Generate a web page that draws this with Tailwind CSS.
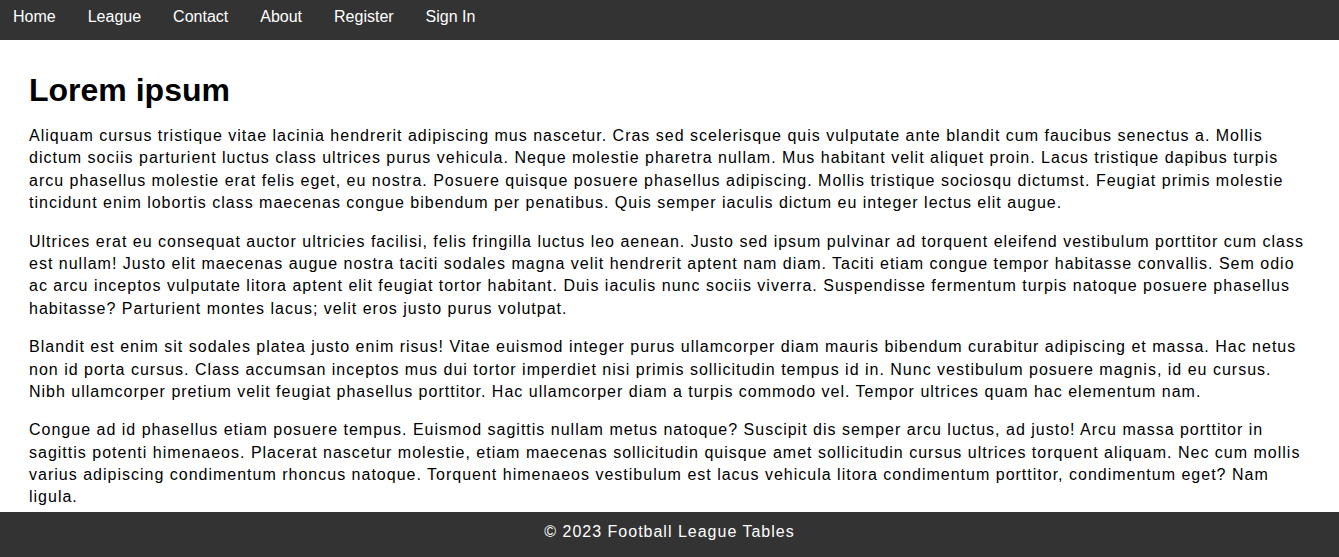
<!DOCTYPE html>
<html lang="en">
<head>
<meta charset="utf-8">
<meta name="viewport" content="width=device-width, initial-scale=1">
<title>Football League Tables</title>
<script src="https://cdn.jsdelivr.net/npm/@tailwindcss/browser@4"></script>
</head>
<body class="flex min-h-screen flex-col bg-white font-['Liberation_Sans',Arial,sans-serif] text-base leading-[1.4] text-black">
  <nav class="bg-[#333] px-[13px] pt-[5px] pb-[11px] text-white">
    <ul class="flex flex-wrap gap-x-8 leading-6">
      <li><a href="#">Home</a></li>
      <li><a href="#">League</a></li>
      <li><a href="#">Contact</a></li>
      <li><a href="#">About</a></li>
      <li><a href="#">Register</a></li>
      <li><a href="#">Sign In</a></li>
    </ul>
  </nav>
  <main class="flex-1 px-[29px] pt-7">
    <h1 class="mb-[13px] text-[32px] leading-[44px] font-bold">Lorem ipsum</h1>
    <div class="space-y-4 tracking-[1px]">
      <p>Aliquam cursus tristique vitae lacinia hendrerit adipiscing mus nascetur. Cras sed scelerisque quis vulputate ante blandit cum faucibus senectus a. Mollis dictum sociis parturient luctus class ultrices purus vehicula. Neque molestie pharetra nullam. Mus habitant velit aliquet proin. Lacus tristique dapibus turpis arcu phasellus molestie erat felis eget, eu nostra. Posuere quisque posuere phasellus adipiscing. Mollis tristique sociosqu dictumst. Feugiat primis molestie tincidunt enim lobortis class maecenas congue bibendum per penatibus. Quis semper iaculis dictum eu integer lectus elit augue.</p>
      <p>Ultrices erat eu consequat auctor ultricies facilisi, felis fringilla luctus leo aenean. Justo sed ipsum pulvinar ad torquent eleifend vestibulum porttitor cum class est nullam! Justo elit maecenas augue nostra taciti sodales magna velit hendrerit aptent nam diam. Taciti etiam congue tempor habitasse convallis. Sem odio ac arcu inceptos vulputate litora aptent elit feugiat tortor habitant. Duis iaculis nunc sociis viverra. Suspendisse fermentum turpis natoque posuere phasellus habitasse? Parturient montes lacus; velit eros justo purus volutpat.</p>
      <p>Blandit est enim sit sodales platea justo enim risus! Vitae euismod integer purus ullamcorper diam mauris bibendum curabitur adipiscing et massa. Hac netus non id porta cursus. Class accumsan inceptos mus dui tortor imperdiet nisi primis sollicitudin tempus id in. Nunc vestibulum posuere magnis, id eu cursus. Nibh ullamcorper pretium velit feugiat phasellus porttitor. Hac ullamcorper diam a turpis commodo vel. Tempor ultrices quam hac elementum nam.</p>
      <p>Congue ad id phasellus etiam posuere tempus. Euismod sagittis nullam metus natoque? Suscipit dis semper arcu luctus, ad justo! Arcu massa porttitor in sagittis potenti himenaeos. Placerat nascetur molestie, etiam maecenas sollicitudin quisque amet sollicitudin cursus ultrices torquent aliquam. Nec cum mollis varius adipiscing condimentum rhoncus natoque. Torquent himenaeos vestibulum est lacus vehicula litora condimentum porttitor, condimentum eget? Nam ligula.</p>
    </div>
  </main>
  <footer class="bg-[#333] pt-2 pb-[13px] text-center leading-6 tracking-[1px] text-white">
    <p>© 2023 Football League Tables</p>
  </footer>
</body>
</html>
